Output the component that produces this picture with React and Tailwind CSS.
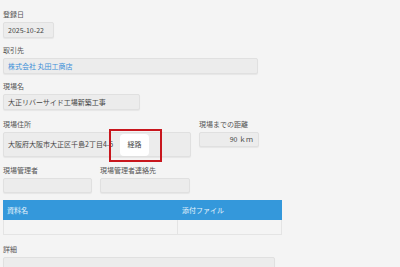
export default function App() {
  const box =
    "rounded-[2px] border border-[#e0e0e0] bg-[#ececec] shadow-[0_1px_1px_rgba(0,0,0,0.06)] text-[7px] flex items-center px-[4px]";
  const label = "text-[7px] leading-[11px] text-[#555] mb-[2px]";

  return (
    <div
      className="min-h-screen bg-[#f4f4f4] pl-[3px] pt-[9px]"
      style={{ fontFamily: '"Noto Sans CJK JP", "Noto Sans", sans-serif' }}
    >
      {/* 登録日 */}
      <div className="mb-[7px]">
        <div className={label}>登録日</div>
        <div className={`${box} h-[16px] w-[51px] text-[#444]`}>2025-10-22</div>
      </div>

      {/* 取引先 */}
      <div className="mb-[7px]">
        <div className={label}>取引先</div>
        <div className={`${box} h-[16px] w-[255px] text-[#3a8fd8]`}>株式会社 丸田工商店</div>
      </div>

      {/* 現場名 */}
      <div className="mb-[9px]">
        <div className={label}>現場名</div>
        <div className={`${box} h-[16px] w-[137px] text-[#444]`}>大正リバーサイド工場新築工事</div>
      </div>

      {/* 現場住所 / 距離 */}
      <div className="mb-[8px] flex gap-[8px]">
        <div>
          <div className={label}>現場住所</div>
          <div className={`${box} h-[25px] w-[188px] text-[#444]`}>
            <span className="w-[112px] shrink-0 whitespace-nowrap">大阪府大阪市大正区千島2丁目4-5</span>
            <div className="relative">
              <button className="flex h-[22px] w-[29px] items-center justify-center rounded-[4px] bg-white text-[7px] text-[#444]">
                経路
              </button>
              <div className="pointer-events-none absolute -left-[11px] -right-[13px] -top-[5px] -bottom-[6px] border-2 border-[#c8161d]" />
            </div>
          </div>
        </div>
        <div>
          <div className={label}>現場までの距離</div>
          <div className={`${box} h-[15px] w-[60px] justify-end pr-[5px] text-[#444]`}>90 ｋｍ</div>
        </div>
      </div>

      {/* 管理者 */}
      <div className="mb-[7px] flex gap-[8px]">
        <div>
          <div className={label}>現場管理者</div>
          <div className={`${box} h-[15px] w-[89px]`} />
        </div>
        <div>
          <div className={label}>現場管理者連絡先</div>
          <div className={`${box} h-[15px] w-[90px]`} />
        </div>
      </div>

      {/* 資料 table */}
      <div className="mb-[9px] w-[279px]">
        <div className="flex h-[20px] items-center bg-[#3498db] text-[7px] text-white/90">
          <div className="w-[175px] pl-[4px]">資料名</div>
          <div className="pl-[4px]">添付ファイル</div>
        </div>
        <div className="flex h-[15px] border border-t-0 border-[#e4e4e4] bg-[#f4f4f4]">
          <div className="w-[174px] border-r border-[#e4e4e4]" />
          <div className="flex-1" />
        </div>
      </div>

      {/* 詳細 */}
      <div>
        <div className={label}>詳細</div>
        <div className={`${box} h-[40px] w-[272px]`} />
      </div>
    </div>
  );
}
